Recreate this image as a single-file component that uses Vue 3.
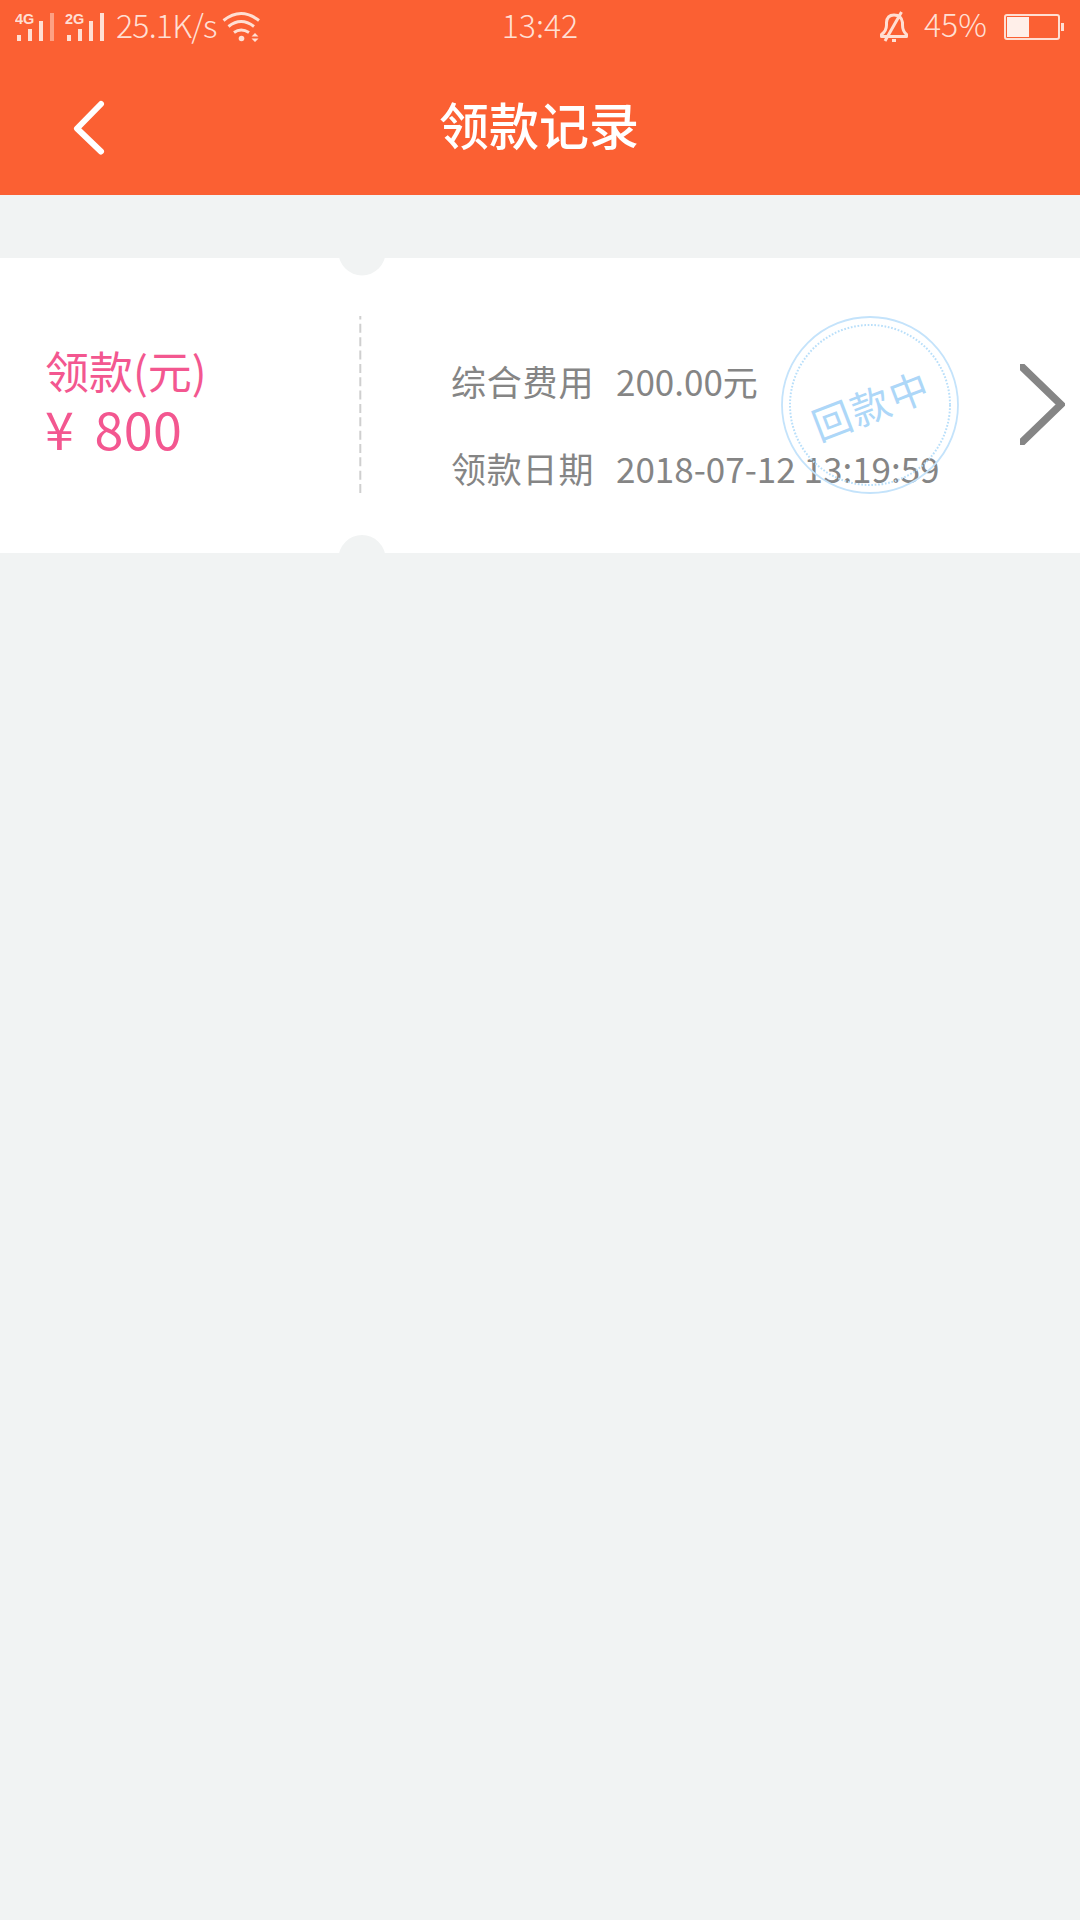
<script setup>
const record = {
  label: '领款(元)',
  currency: '¥',
  amount: '800',
  rows: [
    { name: '综合费用', value: '200.00元' },
    { name: '领款日期', value: '2018-07-12 13:19:59' },
  ],
  state: '回款中',
}
</script>

<template>
  <div class="screen">
    <header class="top">
      <div class="status">
        <div class="side left">
          <svg class="signals" width="100" height="52" viewBox="0 0 100 52" fill="#ffdfd3">
            <text x="0" y="24" class="net">4G</text>
            <path d="M2 35h4v6h-4zM13 29h4v12h-4zM24 21h4v20h-4z" />
            <path d="M35 13h4v28h-4z" opacity=".5" />
            <text x="50" y="24" class="net">2G</text>
            <path d="M52 35h4v6h-4zM63 29h4v12h-4zM74 21h4v20h-4zM85 13h4v28h-4z" />
          </svg>
          <span class="speed">25.1K/s</span>
          <svg class="wifi" width="40" height="52" viewBox="0 0 40 52" fill="none" stroke="#ffdfd3" stroke-width="3">
            <path d="M1.500 20.500Q19 6.500 37 20.500M6.500 26.500Q19 16.500 32 26.500M12 32.500Q19 27.500 27 32.500" />
            <circle cx="19.500" cy="38.500" r="2.800" fill="#ffdfd3" stroke="none" />
            <path d="M29.500 36.500L33 33L36.500 36.500zM29.500 38.500L33 42L36.500 38.500z" fill="#ffdfd3" stroke="none" />
          </svg>
        </div>
        <span class="clock">13:42</span>
        <div class="side right">
          <svg class="bell" width="30" height="52" viewBox="0 0 30 52" fill="none" stroke="#ffdfd3" stroke-width="3" stroke-linejoin="round">
            <path d="M1.500 36.500H26.500V34.500Q22.500 31 22.500 25V22.500Q21.500 15 14 15Q7 15 6.500 22.500V25Q6.500 31 1.500 34.500zM21.500 12L5 41M12 40.500H16" />
          </svg>
          <span class="percent">45%</span>
          <svg class="battery" width="62" height="52" viewBox="0 0 62 52">
            <rect x="2" y="15" width="54" height="24" rx="2" fill="none" stroke="#ffdfd3" stroke-width="2" />
            <rect x="4" y="17" width="22" height="20" fill="#ffefe9" />
            <rect x="58" y="23" width="3" height="8" fill="#ffdfd3" />
          </svg>
        </div>
      </div>
      <div class="nav">
        <svg class="back" width="32" height="56" viewBox="0 0 32 56" fill="none" stroke="#fff" stroke-width="6" stroke-linecap="round" stroke-linejoin="round">
          <path d="M28 4L4 28.500L28 51.500" />
        </svg>
        <h1>领款记录</h1>
      </div>
    </header>

    <main class="card">
      <section class="sum">
        <div class="label">{{ record.label }}</div>
        <div class="amount"><span>{{ record.currency }}</span><span>{{ record.amount }}</span></div>
      </section>
      <svg class="tear" width="46" height="295" viewBox="0 0 46 295">
        <circle cx="23" cy="-6" r="23.500" fill="#f1f3f3" />
        <circle cx="23" cy="300.500" r="23.500" fill="#f1f3f3" />
        <path d="M21.300 58V236" stroke="#cfcfcf" stroke-width="2" stroke-dasharray="9 4.350" stroke-dashoffset="5.500" />
      </svg>
      <section class="details">
        <div v-for="row in record.rows" :key="row.name" class="row">
          <span class="name">{{ row.name }}</span>
          <span class="value">{{ row.value }}</span>
        </div>
        <svg class="stamp" width="180" height="180" viewBox="-90 -90 180 180">
          <circle r="88" fill="none" stroke="#c4e3fb" stroke-width="1.800" />
          <circle r="80" fill="none" stroke="#b9dffa" stroke-width="2" stroke-dasharray="1.700 1.700" />
          <text class="state" transform="rotate(-21)" x="1" y="16" text-anchor="middle">{{ record.state }}</text>
        </svg>
      </section>
      <svg class="more" width="45" height="81" viewBox="0 0 45 81" fill="none" stroke="#858585" stroke-width="7.500">
        <path d="M-2 -1L41 40.500L-2 82" />
      </svg>
    </main>
  </div>
</template>

<style>
body {
  background: #f1f3f3;
}
</style>

<style scoped>
.screen {
  width: 1080px;
  height: 1920px;
  overflow: hidden;
  background: #f1f3f3;
  font-family: "Noto Sans CJK SC", sans-serif;
  white-space: pre;
}
svg {
  display: block;
  flex: none;
}
.top {
  height: 195px;
  background: #fb6033;
  color: #ffdfd3;
}
.status {
  height: 52px;
  display: grid;
  grid-template-columns: 1fr auto 1fr;
  font-size: 32px;
  font-weight: 300;
  line-height: 48px;
}
.side {
  display: flex;
}
.left {
  padding-left: 15px;
}
.right {
  justify-content: flex-end;
  padding-right: 15px;
}
.net {
  font: bold 14.500px "Liberation Sans", sans-serif;
}
.speed {
  width: 106px;
  margin-left: 1px;
  letter-spacing: -0.800px;
}
.percent {
  width: 79px;
  margin-left: 14px;
  line-height: 46px;
}
.nav {
  height: 143px;
  display: flex;
  align-items: flex-start;
  padding-left: 73px;
}
.back {
  margin-top: 48px;
}
h1 {
  margin: 34px 0 0 334px;
  color: #fff;
  font-size: 50px;
  font-weight: 500;
  line-height: 74px;
}
.card {
  display: flex;
  height: 295px;
  margin-top: 63px;
  background: #fff;
}
.sum {
  flex: none;
  box-sizing: border-box;
  width: 339px;
  padding: 83px 0 0 45px;
  color: #f35790;
}
.label {
  font-size: 44px;
  line-height: 58px;
}
.amount {
  display: flex;
  gap: 20px;
  font-size: 52px;
  line-height: 57px;
  letter-spacing: 0.500px;
}
.details {
  position: relative;
  flex: none;
  box-sizing: border-box;
  width: 635px;
  padding: 79px 0 0 66px;
  color: #858585;
}
.row {
  display: flex;
  height: 87px;
  font-size: 35px;
  line-height: 88px;
}
.name {
  width: 165px;
  letter-spacing: 0.800px;
}
.stamp {
  position: absolute;
  left: 395px;
  top: 57px;
}
.state {
  fill: #add7f8;
  font-size: 39px;
  letter-spacing: 2px;
}
.more {
  margin-top: 106px;
}
</style>
